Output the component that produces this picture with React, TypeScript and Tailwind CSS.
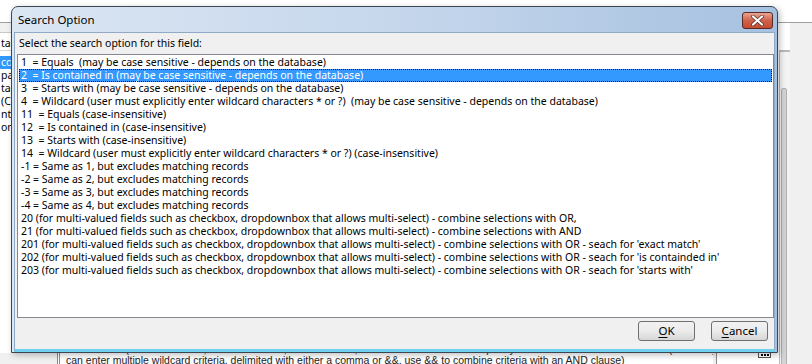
import React from "react";

const items = [
  "1  = Equals  (may be case sensitive - depends on the database)",
  "2  = Is contained in (may be case sensitive - depends on the database)",
  "3  = Starts with (may be case sensitive - depends on the database)",
  "4  = Wildcard (user must explicitly enter wildcard characters * or ?)  (may be case sensitive - depends on the database)",
  "11  = Equals (case-insensitive)",
  "12  = Is contained in (case-insensitive)",
  "13  = Starts with (case-insensitive)",
  "14  = Wildcard (user must explicitly enter wildcard characters * or ?) (case-insensitive)",
  "-1 = Same as 1, but excludes matching records",
  "-2 = Same as 2, but excludes matching records",
  "-3 = Same as 3, but excludes matching records",
  "-4 = Same as 4, but excludes matching records",
  "20 (for multi-valued fields such as checkbox, dropdownbox that allows multi-select) - combine selections with OR,",
  "21 (for multi-valued fields such as checkbox, dropdownbox that allows multi-select) - combine selections with AND",
  "201 (for multi-valued fields such as checkbox, dropdownbox that allows multi-select) - combine selections with OR - seach for 'exact match'",
  "202 (for multi-valued fields such as checkbox, dropdownbox that allows multi-select) - combine selections with OR - seach for 'is containded in'",
  "203 (for multi-valued fields such as checkbox, dropdownbox that allows multi-select) - combine selections with OR - seach for 'starts with'",
];

const behindRows = ["cor", "pa", "tac", "(C", "ntr", "om"];

export default function App() {
  return (
    <div className="relative w-[812px] h-[364px] overflow-hidden bg-[#f0f0f0] font-['Noto_Sans',sans-serif] text-[10.5px] text-black">
      {/* ********** window behind, top band ********** */}
      <div className="absolute left-0 top-0 w-[812px] h-[23px] bg-white border-b border-[#a0a0a0]" />

      {/* ********** window behind, left strip ********** */}
      <div className="absolute left-0 top-[32px] w-[20px] h-[321px] bg-white border-t border-[#c8c8c8]">
        <div className="h-[18px] leading-[20px] pl-[1px] border-b border-[#d8d8d8]">ta</div>
        <div className="pt-[5px]">
          {behindRows.map((r, i) => (
            <div key={r} className={`h-[13px] leading-[13px] pl-[1px] ${i === 0 ? "bg-[#3399ff] text-white" : ""}`}>
              {r}
            </div>
          ))}
        </div>
      </div>

      {/* ********** window behind, right strip ********** */}
      <div className="absolute left-[770px] top-[23px] w-[20px] h-[341px] bg-white">
        <div className="mt-[27px] ml-[9px] w-[11px] h-[314px] border-t-2 border-l border-[#b8b8b8] bg-[#f4f4f4]">
          <div className="mt-[36px] ml-[1px] w-[6px] h-[280px] bg-[#d4d4d4] border border-[#b0b0b0] rounded-[2px]" />
        </div>
      </div>

      {/* ********** panel behind, bottom ********** */}
      <div className="absolute left-[57px] top-[350px] w-[656px] h-[14px] bg-white border-l-[3px] border-double border-[#8a8a8a] font-['Liberation_Sans',sans-serif] text-[10.5px] text-[#222] leading-[11px] whitespace-pre overflow-hidden">
        <div className="pl-[6px] -mt-[6px]">contained in (1 = exact match; 2 = contained in; 3 = starts with; 4 = wildcard - user must explicitly enter wildcard characters * or ?  (if used by fields on you</div>
        <div className="pl-[6px]">can enter multiple wildcard criteria, delimited with either a comma or &amp;&amp;, use &amp;&amp; to combine criteria with an AND clause)</div>
      </div>
      <div className="absolute left-[716px] top-[346px] w-[58px] h-[18px] bg-white border-l border-[#8a8a8a]">
        <div className="absolute right-[3px] top-[5px] w-[13px] h-[7px] border border-[#555] flex items-center justify-center gap-[1px] bg-white">
          <span className="w-[2px] h-[2px] bg-black" />
          <span className="w-[2px] h-[2px] bg-black" />
          <span className="w-[2px] h-[2px] bg-black" />
        </div>
      </div>

      {/* ********** Search Option dialog ********** */}
      <div className="absolute left-[11px] top-[6px] w-[767px] h-[347px] flex flex-col rounded-t-[7px] border border-[#3a4654] bg-gradient-to-r from-[#dbe6f3] via-[#c6d7ec] to-[#a6c1e0] shadow-[2px_2px_6px_rgba(0,0,0,0.25)]">
        {/* title bar */}
        <div className="relative h-[25px] flex items-center pl-[6px] text-[11.5px] text-black">
          <span className="pt-[1px]">Search Option</span>
          <div className="absolute right-[4px] top-[5px] w-[31px] h-[17px] rounded-[3px] border border-[#5a2a24] bg-gradient-to-b from-[#e8a493] via-[#d0624b] to-[#c44b31] flex items-center justify-center">
            <svg width="13" height="11" viewBox="0 0 13 11">
              <path d="M2 1.5 L11 9.5 M11 1.5 L2 9.5" stroke="#5a2a24" strokeWidth="3.6" strokeLinecap="round" />
              <path d="M2 1.5 L11 9.5 M11 1.5 L2 9.5" stroke="#ffffff" strokeWidth="2.2" strokeLinecap="round" />
            </svg>
          </div>
        </div>

        {/* client area */}
        <div className="flex-1 mx-[2px] flex flex-col bg-[#f0f0f0] border border-[#8fa9c6] border-b-[3px] border-b-[#6fd0f0]">
          <div className="h-[21px] pl-[4px] pt-[2px] leading-[16px]">Select the search option for this field:</div>
          <div className="ml-[2px] w-[757px] h-[264px] bg-white border border-[#828790] pt-[1px] px-[1px]">
            {items.map((t, i) => (
              <div
                key={t}
                className={`h-[13px] leading-[13px] pl-[2px] whitespace-pre ${
                  i === 1 ? "bg-[#3399ff] text-white outline-1 outline-dotted outline-[#111] -outline-offset-1" : ""
                }`}
              >
                {t}
              </div>
            ))}
          </div>
          <div className="flex justify-end gap-[16px] pr-[6px] pt-[3px]">
            <button className="w-[57px] h-[20px] rounded-[3px] border border-[#707070] bg-gradient-to-b from-[#f2f2f2] via-[#ebebeb] to-[#d6d6d6] text-[11.5px] leading-[16px]">
              <span className="underline underline-offset-2">O</span>K
            </button>
            <button className="w-[57px] h-[20px] rounded-[3px] border border-[#707070] bg-gradient-to-b from-[#f2f2f2] via-[#ebebeb] to-[#d6d6d6] text-[11.5px] leading-[16px]">
              <span className="underline underline-offset-2">C</span>ancel
            </button>
          </div>
        </div>
      </div>
    </div>
  );
}
